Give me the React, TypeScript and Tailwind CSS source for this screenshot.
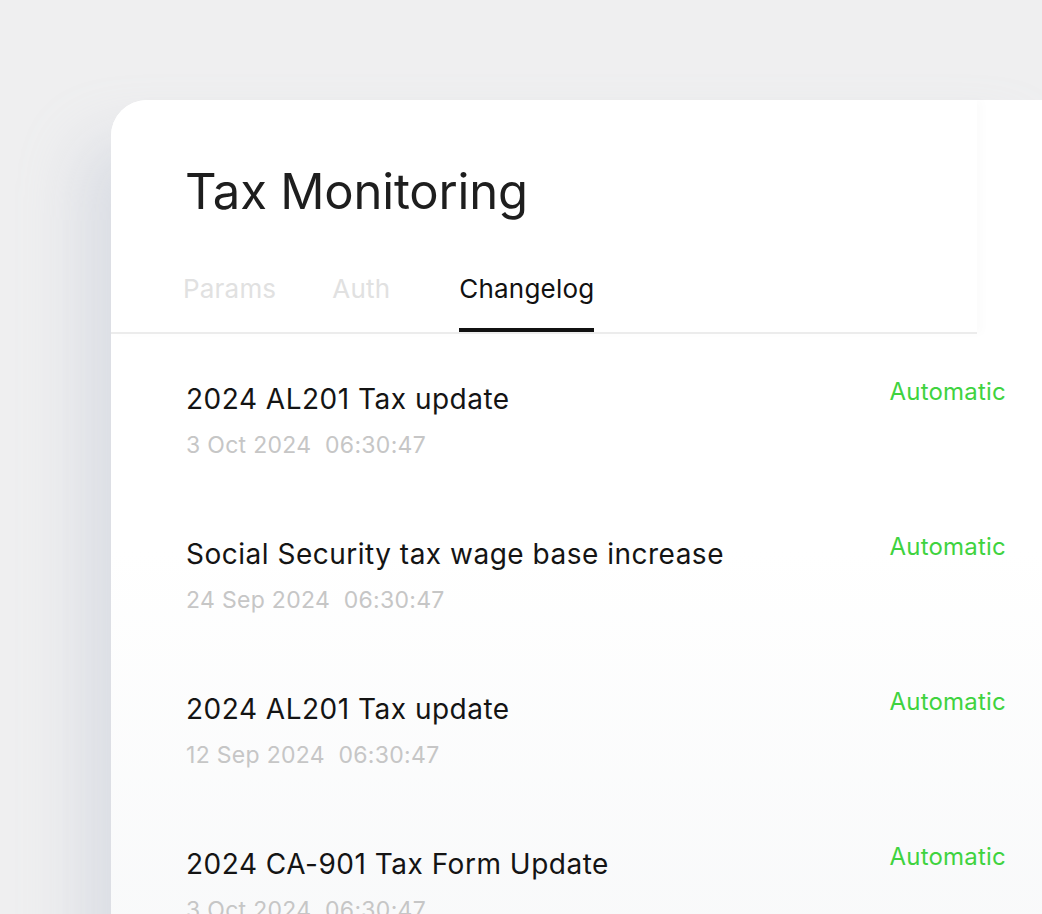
const rows = [
  { title: "2024 AL201 Tax update", date: "3 Oct 2024", time: "06:30:47" },
  { title: "Social Security tax wage base increase", date: "24 Sep 2024", time: "06:30:47" },
  { title: "2024 AL201 Tax update", date: "12 Sep 2024", time: "06:30:47" },
  { title: "2024 CA-901 Tax Form Update", date: "3 Oct 2024", time: "06:30:47" },
];

function Tabs() {
  return (
    <div className="flex items-end pl-[72px] h-[74px] text-[26px] leading-[32px] tracking-[0.2px]">
      <span className="pb-[27px] text-[#e1e1e1]">Params</span>
      <span className="ml-[56px] pb-[27px] text-[#e1e1e1]">Auth</span>
      <span className="ml-[69px] pb-[23px] text-[#111] border-b-4 border-[#111]">Changelog</span>
    </div>
  );
}

export default function App() {
  return (
    <div
      className="h-[914px] overflow-hidden bg-[#efeff0] pl-[111px] pt-[100px]"
      style={{ fontFamily: "Inter, 'Noto Sans', sans-serif" }}
    >
      <div className="relative h-[900px] rounded-tl-[36px] bg-gradient-to-b from-white via-white to-[#f7f8f9] shadow-[-30px_40px_60px_rgba(180,190,205,0.35)]">
        <div className="relative z-10 w-[866px] rounded-tl-[36px] bg-white shadow-[6px_0_8px_rgba(0,0,0,0.015)]">
          <h1 className="pl-[74px] pt-[64px] text-[49px] leading-[56px] font-normal tracking-[-0.2px] text-[#1e1e1e]">
            Tax Monitoring
          </h1>
          <div className="mt-[38px] border-b-2 border-[#ececec]">
            <Tabs />
          </div>
        </div>

        <div className="flex flex-col pt-[48px]">
          {rows.map((r, i) => (
            <div key={i} className="flex h-[155px] pl-[75px] pr-[36px]">
              <div className="flex flex-1 flex-col">
                <span className="text-[28px] leading-[34px] tracking-[0.5px] text-[#141414]">{r.title}</span>
                <span className="mt-[14px] text-[23px] leading-[30px] tracking-[0.3px] text-[#c6c6c6]">
                  {r.date}&nbsp;&nbsp;{r.time}
                </span>
              </div>
              <span className="-mt-[5px] text-[24px] leading-[30px] tracking-[0.2px] text-[#3fd33f]">Automatic</span>
            </div>
          ))}
        </div>
      </div>
    </div>
  );
}
